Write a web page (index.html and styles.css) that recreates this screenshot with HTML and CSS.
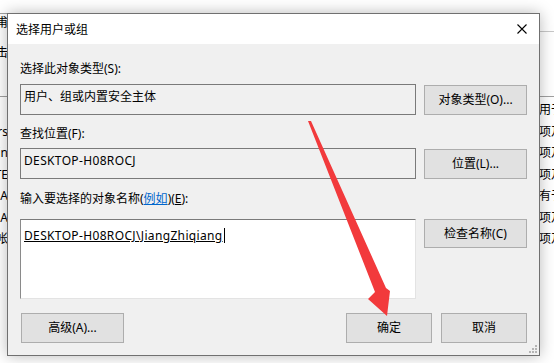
FILE: index.html
```html
<!DOCTYPE html>
<html lang="zh-CN">
<head>
<meta charset="utf-8">
<title>选择用户或组</title>
<link rel="stylesheet" href="styles.css">
</head>
<body>
<div class="desk">
  <div class="bgwin">
    <div class="bgcol bgleft">
      <div class="bghead"><span>甫</span></div>
      <div class="bgrow2"><span>取击</span></div>
      <div class="bglist">
        <div class="bgitem"></div>
        <div class="bgitem"><span>Users</span></div>
        <div class="bgitem"><span>Domain</span></div>
        <div class="bgitem"><span>TE</span></div>
        <div class="bgitem"><span>A</span></div>
        <div class="bgitem"><span>A</span></div>
        <div class="bgitem"><span>帐</span></div>
      </div>
    </div>
    <div class="bgcol bgright">
      <div class="bghead"></div>
      <div class="bgrow2"></div>
      <div class="bglist">
        <div class="bgitem"><span>用于</span></div>
        <div class="bgitem"><span>项及</span></div>
        <div class="bgitem"><span>项及</span></div>
        <div class="bgitem"><span>项及</span></div>
        <div class="bgitem"><span>有于</span></div>
        <div class="bgitem"><span>项及</span></div>
        <div class="bgitem"><span>项及</span></div>
      </div>
    </div>
  </div>

  <div class="dialog">
    <div class="titlebar">
      <span class="title">选择用户或组</span>
      <svg class="close" width="10" height="10" viewBox="0 0 10 10"><path d="M0.5 0.5 L9.5 9.5 M9.5 0.5 L0.5 9.5" stroke="#000" stroke-width="1.1" fill="none"/></svg>
    </div>
    <div class="body">
      <div class="label l1">选择此对象类型(S):</div>
      <div class="row r1">
        <div class="box ro">用户、组或内置安全主体</div>
        <button class="btn">对象类型(O)...</button>
      </div>
      <div class="label l2">查找位置(F):</div>
      <div class="row r2">
        <div class="box ro"><span class="latin">DESKTOP-H08ROCJ</span></div>
        <button class="btn">位置(L)...</button>
      </div>
      <div class="label l3">输入要选择的对象名称(<span class="link">例如</span>)(<u>E</u>):</div>
      <div class="row r3">
        <div class="box edit"><span class="entered latin">DESKTOP-H08ROCJ\JiangZhiqiang</span><span class="caret"></span></div>
        <button class="btn">检查名称(C)</button>
      </div>
      <div class="bottom">
        <button class="btn adv">高级(A)...</button>
        <div class="spacer"></div>
        <button class="btn small">确定</button>
        <button class="btn small">取消</button>
      </div>
    </div>
    <svg class="grip" width="9" height="9" viewBox="0 0 9 9">
      <rect x="7" y="1" width="2" height="2" fill="#b4b4b4"/>
      <rect x="4" y="4" width="2" height="2" fill="#b4b4b4"/>
      <rect x="7" y="4" width="2" height="2" fill="#b4b4b4"/>
      <rect x="1" y="7" width="2" height="2" fill="#b4b4b4"/>
      <rect x="4" y="7" width="2" height="2" fill="#b4b4b4"/>
      <rect x="7" y="7" width="2" height="2" fill="#b4b4b4"/>
    </svg>
  </div>

  <svg class="arrow" width="554" height="363" viewBox="0 0 554 363">
    <polygon points="308,121 311,121 386,288 390,291 387,316 368,299 375,292" fill="#f23a3c"/>
  </svg>
</div>
</body>
</html>
```

FILE: styles.css
```css
* { box-sizing: border-box; }
html, body { margin: 0; padding: 0; }
body {
  width: 554px;
  height: 363px;
  overflow: hidden;
  background: #ffffff;
  font-family: "Noto Sans", "Noto Sans CJK SC", sans-serif;
  font-size: 12px;
  line-height: 16px;
  color: #000;
}
.desk {
  position: relative;
  width: 554px;
  height: 363px;
  overflow: hidden;
}

/* background window */
.bgwin {
  display: flex;
  justify-content: space-between;
  height: 100%;
}
.bgcol {
  display: flex;
  flex-direction: column;
}
.bgleft { width: 8px; }
.bgright { width: 15px; }
.bghead {
  height: 19px;
  margin-top: 13px;
  display: flex;
  align-items: center;
}
.bgleft .bghead {
  border-top: 1px solid #a0a0a0;
  justify-content: flex-end;
}
.bgright .bghead { border-bottom: 1px solid #c8c8c8; }
.bgrow2 {
  height: 65px;
  border-bottom: 1px solid #a0a0a0;
  padding-top: 13px;
  display: flex;
  justify-content: flex-end;
  align-items: flex-start;
}
.bglist { display: flex; flex-direction: column; padding-top: 2px; }
.bgitem {
  height: 21.5px;
  line-height: 21.5px;
  display: flex;
  white-space: nowrap;
}
.bgleft .bgitem { justify-content: flex-end; }
.bgleft span, .bgright span { white-space: nowrap; }

/* dialog */
.dialog {
  position: absolute;
  left: 7px;
  top: 13px;
  width: 533px;
  height: 343px;
  border: 1px solid #707070;
  background: #f0f0f0;
  box-shadow: 0 0 14px rgba(0, 0, 0, 0.28);
  display: flex;
  flex-direction: column;
}
.titlebar {
  height: 30px;
  background: #ffffff;
  display: flex;
  align-items: center;
  justify-content: space-between;
  padding: 0 12px 0 8px;
  flex: none;
}
.title { padding-top: 1px; }
.close { display: block; margin-top: -1px; }
.body {
  flex: 1;
  display: flex;
  flex-direction: column;
  padding: 0 12px 0 12px;
}
.label { height: 16px; white-space: nowrap; }
.l1 { margin-top: 17px; }
.l2 { margin-top: 11px; }
.l3 { margin-top: 12px; }
.link { color: #0066cc; text-decoration: underline; }
.latin { letter-spacing: 0.35px; }
.row {
  display: grid;
  grid-template-columns: 1fr 103px;
  column-gap: 8px;
}
.r1 { margin-top: 7px; }
.r2 { margin-top: 6px; }
.r3 { margin-top: 12px; }
.box {
  height: 31px;
  border: 1px solid #7a7a7a;
  padding: 4px 3px 0 3px;
  white-space: nowrap;
}
.box.ro { background: #f0f0f0; }
.r1 .btn, .r2 .btn { align-self: end; height: 30px; }
.box.edit {
  height: 80px;
  background: #ffffff;
  border-top-color: #7a7a7a;
  border-left-color: #8a8a8a;
  border-right-color: #e3e3e3;
  border-bottom-color: #e3e3e3;
  padding-top: 8px;
  display: flex;
  align-items: flex-start;
}
.entered { text-decoration: underline; }
.caret {
  display: inline-block;
  width: 1px;
  height: 15px;
  background: #000;
  margin-left: 1px;
}
.r3 .btn { align-self: start; height: 29px; }
.btn {
  font: inherit;
  color: #000;
  background: #e1e1e1;
  border: 1px solid #adadad;
  border-radius: 0;
  padding: 0;
  margin: 0;
  line-height: 16px;
}
.bottom {
  display: flex;
  column-gap: 9px;
  margin-top: 14px;
}
.bottom .btn { height: 30px; }
.adv { width: 103px; margin-left: 1px; }
.spacer { flex: 1; }
.small { width: 86px; }
.grip {
  position: absolute;
  right: 2px;
  bottom: 2px;
}
.arrow {
  position: absolute;
  left: 0;
  top: 0;
  pointer-events: none;
}
```
